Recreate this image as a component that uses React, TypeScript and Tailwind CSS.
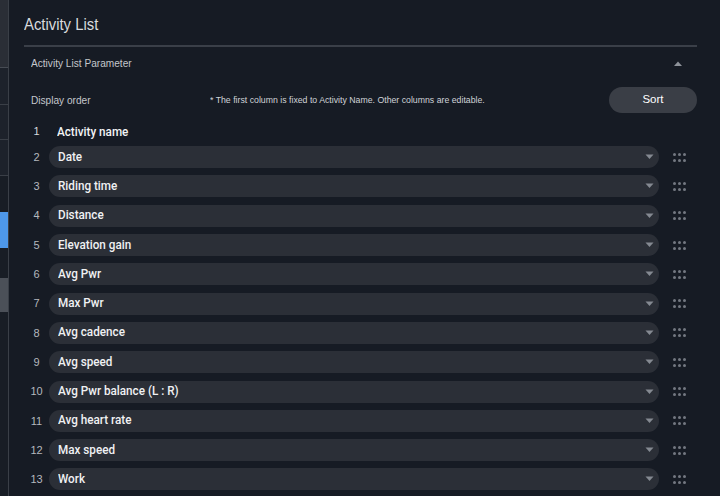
import React from "react";

const rows = [
  "Date",
  "Riding time",
  "Distance",
  "Elevation gain",
  "Avg Pwr",
  "Max Pwr",
  "Avg cadence",
  "Avg speed",
  "Avg Pwr balance (L : R)",
  "Avg heart rate",
  "Max speed",
  "Work",
];

function DragDots() {
  return (
    <div className="grid grid-cols-3 gap-x-[2px] gap-y-[3px]">
      {Array.from({ length: 6 }).map((_, i) => (
        <span key={i} className="w-[3px] h-[3px] rounded-full bg-[#737881]" />
      ))}
    </div>
  );
}

function Row({ n, label }: { n: number; label: string }) {
  return (
    <div className="flex items-center h-[29.3px]">
      <div className="w-[25px] text-center text-[11px] text-[#b4b8be]">{n}</div>
      <div className="flex-1 h-[22px] rounded-full bg-[#2b2f37] flex items-center pl-[9px] pr-[5px]">
        <div className="flex-1 flex items-center pb-[1px]">
          <span className="inline-block origin-left scale-x-[0.9] text-[13px] leading-[16px] font-medium text-[#f0f1f3] font-['Roboto',sans-serif]">
            {label}
          </span>
        </div>
        <svg width="9" height="6" viewBox="0 0 9 6">
          <path d="M0.5 0.5 L8.5 0.5 L4.5 5 Z" fill="#858a92" />
        </svg>
      </div>
      <div className="w-[38px] flex justify-center pl-[2px]">
        <DragDots />
      </div>
    </div>
  );
}

export default function App() {
  return (
    <div className="w-[720px] h-[496px] flex bg-[#161b24] overflow-hidden font-['Liberation_Sans',Arial,sans-serif]">
      <div className="w-[9px] flex flex-col border-r border-[#3a3f47]">
        <div className="h-[68px] bg-[#2a2e36] border-b border-[#474c54]" />
        <div className="h-[37px] bg-[#1d222b] border-b border-[#3a3f47]" />
        <div className="h-[35px] bg-[#1d222b] border-b border-[#3a3f47]" />
        <div className="h-[36px] bg-[#1d222b] border-b border-[#3a3f47]" />
        <div className="h-[36px] bg-[#181d25]" />
        <div className="h-[36px] bg-[#4e98ea]" />
        <div className="h-[30px] bg-[#181d25]" />
        <div className="h-[34px] bg-[#4b5058]" />
        <div className="flex-1 bg-[#181d25]" />
      </div>

      <div className="flex-1 pl-[15px] pr-[23px]">
        <div className="h-[45px] flex items-center pt-[3px]">
          <h1 className="inline-block origin-left scale-x-[0.9] text-[16.5px] text-[#d9dbde]">Activity List</h1>
        </div>
        <div className="h-[1.5px] bg-[#3a3f48]" />

        <div className="h-[33px] flex items-center justify-between pl-[7px] pr-[15px]">
          <span className="inline-block origin-left scale-x-[0.92] text-[11px] text-[#c4c7cc]">
            Activity List Parameter
          </span>
          <svg width="8" height="5" viewBox="0 0 8 5">
            <path d="M0 5 L8 5 L4 0.5 Z" fill="#8e939a" />
          </svg>
        </div>

        <div className="h-[40px] flex items-center pl-[7px]">
          <div className="w-[179px] pb-[1px]">
            <span className="inline-block origin-left scale-x-[0.92] text-[11px] text-[#c4c7cc]">Display order</span>
          </div>
          <div className="flex-1 pb-[3px]">
            <span className="inline-block origin-left scale-x-[0.92] text-[9.5px] text-[#d0d3d7] whitespace-nowrap">
              * The first column is fixed to Activity Name. Other columns are editable.
            </span>
          </div>
          <button className="w-[88px] h-[26px] rounded-full bg-[#3a3e46] text-[11.5px] text-white">
            Sort
          </button>
        </div>

        <div className="flex items-center h-[22px] mt-[1px]">
          <div className="w-[25px] text-center text-[11px] text-[#d6d9dd]">1</div>
          <span className="ml-[8px] inline-block origin-left scale-x-[0.9] text-[13px] font-medium text-[#f2f3f5] font-['Roboto',sans-serif]">
            Activity name
          </span>
        </div>

        <div className="flex flex-col">
          {rows.map((r, i) => (
            <Row key={r} n={i + 2} label={r} />
          ))}
        </div>
      </div>
    </div>
  );
}
